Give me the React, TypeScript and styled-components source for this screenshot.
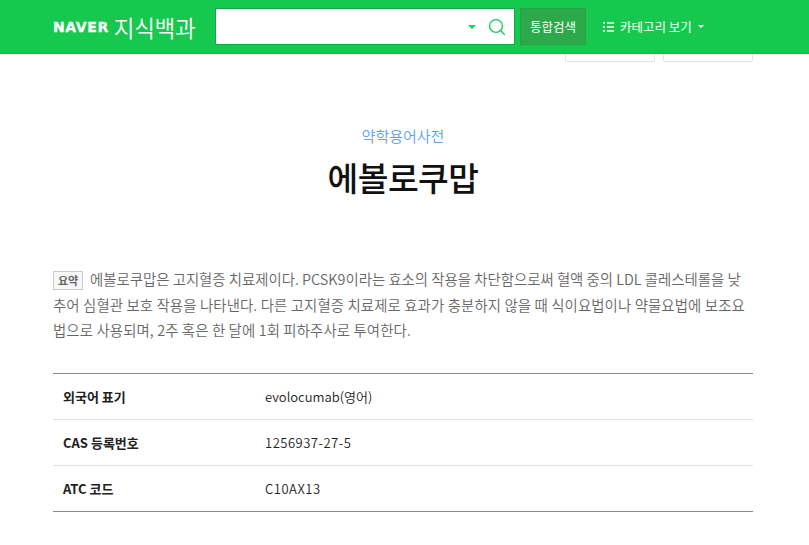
import styled, { createGlobalStyle } from "styled-components";

const GlobalStyle = createGlobalStyle`
  html, body {
    margin: 0;
    padding: 0;
    background: #fff;
    overflow: hidden;
    font-family: "Noto Sans CJK KR", "Noto Sans", sans-serif;
  }
  * { box-sizing: border-box; }
`;

const rows = [
  { label: "외국어 표기", value: "evolocumab(영어)", code: false },
  { label: "CAS 등록번호", value: "1256937-27-5", code: true },
  { label: "ATC 코드", value: "C10AX13", code: true },
];

export default function App() {
  return (
    <>
      <GlobalStyle />
      <Header>
        <Logo>
          <Naver>NAVER</Naver>
          <LogoTitle>지식백과</LogoTitle>
        </Logo>
        <SearchBox>
          <SearchInput type="text" />
          <Caret />
          <svg width="18" height="18" viewBox="0 0 18 18" fill="none" stroke="#19ce60" strokeWidth="1.4">
            <circle cx="8" cy="8" r="6.4" />
            <path d="M12.6 12.6 L16.4 16.4" strokeLinecap="round" />
          </svg>
        </SearchBox>
        <SearchButton>통합검색</SearchButton>
        <CategoryButton>
          <svg width="11" height="10" viewBox="0 0 11 10" fill="#fff">
            <rect x="0" y="0" width="2" height="2" />
            <rect x="4" y="0.25" width="7" height="1.5" />
            <rect x="0" y="4" width="2" height="2" />
            <rect x="4" y="4.25" width="7" height="1.5" />
            <rect x="0" y="8" width="2" height="2" />
            <rect x="4" y="8.25" width="7" height="1.5" />
          </svg>
          카테고리 보기
          <SmallCaret />
        </CategoryButton>
      </Header>
      <Tools>
        <ToolButton />
        <ToolButton />
      </Tools>
      <Main>
        <Category>약학용어사전</Category>
        <Title>에볼로쿠맙</Title>
        <Summary>
          <SummaryLine>
            <Badge>요약</Badge>에볼로쿠맙은 고지혈증 치료제이다. PCSK9이라는 효소의 작용을 차단함으로써 혈액 중의 LDL 콜레스테롤을 낮
          </SummaryLine>
          <SummaryLine $wide>추어 심혈관 보호 작용을 나타낸다. 다른 고지혈증 치료제로 효과가 충분하지 않을 때 식이요법이나 약물요법에 보조요</SummaryLine>
          <SummaryLine $wide>법으로 사용되며, 2주 혹은 한 달에 1회 피하주사로 투여한다.</SummaryLine>
        </Summary>
        <InfoTable>
          <tbody>
            {rows.map((row) => (
              <tr key={row.label}>
                <InfoLabel>{row.label}</InfoLabel>
                <InfoValue $code={row.code}>{row.value}</InfoValue>
              </tr>
            ))}
          </tbody>
        </InfoTable>
      </Main>
    </>
  );
}

const Header = styled.header`
  display: flex;
  align-items: center;
  height: 54px;
  padding-left: 53px;
  background: #17c84f;
  border-bottom: 1px solid #14b548;
`;

const Logo = styled.div`
  display: flex;
  align-items: center;
  width: 162px;
  color: #fff;
`;

const Naver = styled.span`
  font-family: "DejaVu Sans", "Liberation Sans", sans-serif;
  font-size: 14px;
  font-weight: 700;
  letter-spacing: 0.6px;
  -webkit-text-stroke: 0.3px #fff;
  margin-right: 5px;
`;

const LogoTitle = styled.span`
  font-size: 22.5px;
  font-weight: 350;
  letter-spacing: -0.3px;
  line-height: 28px;
`;

const SearchBox = styled.div`
  display: flex;
  align-items: center;
  width: 300px;
  height: 37px;
  padding-right: 8px;
  background: #fff;
  border: 1px solid #12a843;
`;

const SearchInput = styled.input`
  flex: 1;
  min-width: 0;
  height: 100%;
  border: 0;
  outline: 0;
  background: transparent;
`;

const Caret = styled.span`
  width: 0;
  height: 0;
  margin-right: 12px;
  border-left: 4px solid transparent;
  border-right: 4px solid transparent;
  border-top: 4px solid #19ce60;
`;

const SearchButton = styled.button`
  width: 66px;
  height: 37px;
  margin-left: 5px;
  padding: 0;
  color: #fff;
  font-family: inherit;
  font-size: 12.5px;
  background: #2ca948;
  border: 1px solid #2a9f45;
`;

const CategoryButton = styled.button`
  display: flex;
  align-items: center;
  gap: 6px;
  margin-left: 17px;
  padding: 0;
  color: #fff;
  font-family: inherit;
  font-size: 12.5px;
  background: none;
  border: 0;
`;

const SmallCaret = styled.span`
  width: 0;
  height: 0;
  border-left: 3px solid transparent;
  border-right: 3px solid transparent;
  border-top: 3px solid #fff;
`;

const Tools = styled.div`
  display: flex;
  justify-content: flex-end;
  align-items: flex-end;
  gap: 8px;
  width: 753px;
  height: 8px;
  overflow: hidden;
`;

const ToolButton = styled.div`
  width: 90px;
  height: 30px;
  border: 1px solid #e3e3e3;
  border-radius: 2px;
`;

const Main = styled.main`
  width: 700px;
  margin-left: 53px;
`;

const Category = styled.div`
  margin-top: 64px;
  color: #5aa5f0;
  font-size: 15px;
  font-weight: 350;
  line-height: 20px;
  text-align: center;
`;

const Title = styled.h1`
  margin: 8px 0 0;
  color: #111;
  font-size: 33.4px;
  font-weight: 500;
  line-height: 46px;
  letter-spacing: -0.5px;
  text-align: center;
`;

const Summary = styled.div`
  margin: 66px 0 0;
  color: #666;
  font-size: 14.4px;
  font-weight: 350;
  line-height: 25.6px;
  white-space: nowrap;
`;

const SummaryLine = styled.div<{ $wide?: boolean }>`
  letter-spacing: ${(p) => (p.$wide ? "0.12px" : "0")};
`;

const Badge = styled.span`
  display: inline-block;
  width: 30px;
  height: 19px;
  margin-right: 7px;
  color: #666;
  font-size: 11px;
  font-weight: 700;
  line-height: 17px;
  text-align: center;
  background: #f7f7f7;
  border: 1px solid #ccc;
`;

const InfoTable = styled.table`
  width: 100%;
  margin-top: 30px;
  border-collapse: collapse;
  border-top: 1px solid #8a8a8a;
  border-bottom: 1px solid #8a8a8a;
  font-size: 13px;
  color: #222;

  tr + tr td {
    border-top: 1px solid #e2e2e2;
  }
`;

const InfoLabel = styled.td`
  width: 212px;
  height: 46px;
  padding: 0 0 0 10px;
  font-weight: 700;
`;

const InfoValue = styled.td<{ $code?: boolean }>`
  height: 46px;
  padding: 0;
  font-weight: 350;
  letter-spacing: ${(p) => (p.$code ? "0.5px" : "0")};
`;
